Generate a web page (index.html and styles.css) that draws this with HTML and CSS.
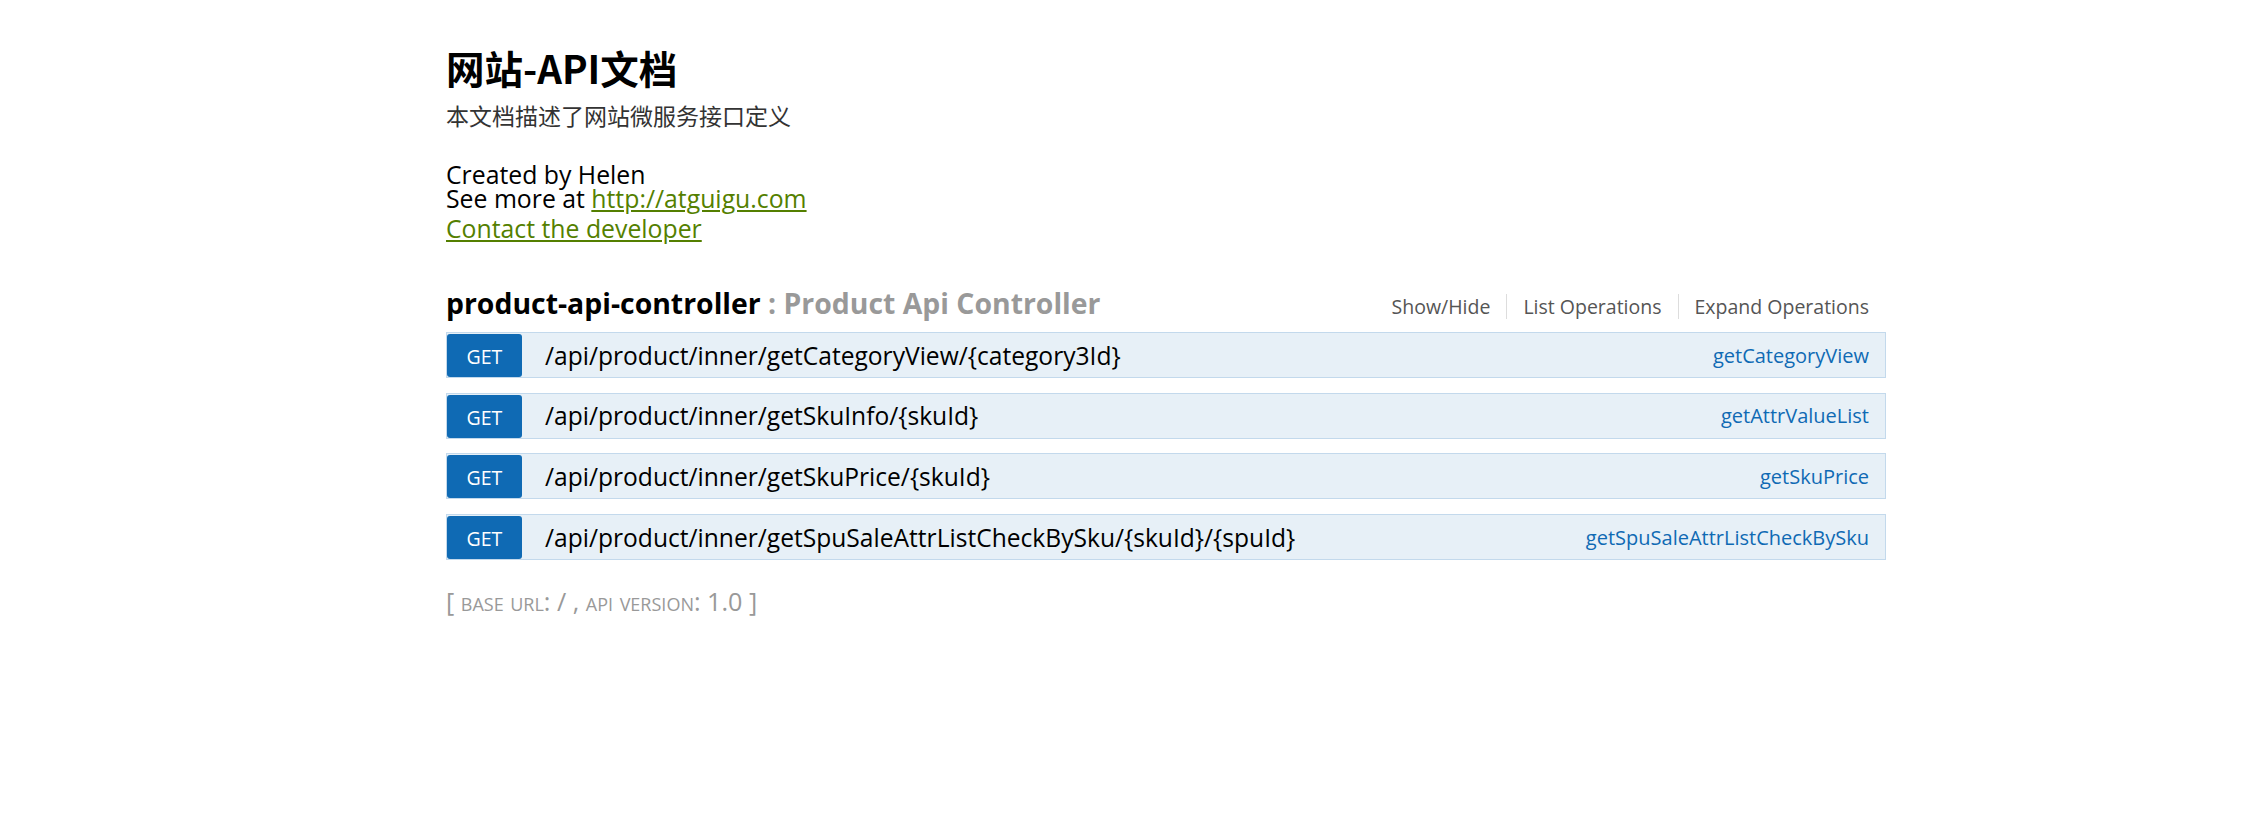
FILE: index.html
```html
<!DOCTYPE html>
<html lang="zh-CN">
<head>
<meta charset="utf-8">
<title>网站-API文档</title>
<link rel="stylesheet" href="styles.css">
</head>
<body>
<div class="wrap">
  <div class="info">
    <div class="info-title">网站-API文档</div>
    <div class="info-desc">本文档描述了网站微服务接口定义</div>
    <div class="info-meta">
      <div>Created by Helen</div>
      <div>See more at <a href="#">http://atguigu.com</a></div>
    </div>
    <div class="info-contact"><a href="#">Contact the developer</a></div>
  </div>

  <div class="resource">
    <div class="res-heading">
      <h2 class="res-title"><span class="res-name">product-api-controller</span> <span class="res-desc">: Product Api Controller</span></h2>
      <ul class="options">
        <li>Show/Hide</li>
        <li>List Operations</li>
        <li>Expand Operations</li>
      </ul>
    </div>
    <ul class="ops">
      <li class="op">
        <span class="method">GET</span>
        <span class="path">/api/product/inner/getCategoryView/{category3Id}</span>
        <span class="summary">getCategoryView</span>
      </li>
      <li class="op">
        <span class="method">GET</span>
        <span class="path">/api/product/inner/getSkuInfo/{skuId}</span>
        <span class="summary">getAttrValueList</span>
      </li>
      <li class="op">
        <span class="method">GET</span>
        <span class="path">/api/product/inner/getSkuPrice/{skuId}</span>
        <span class="summary">getSkuPrice</span>
      </li>
      <li class="op">
        <span class="method">GET</span>
        <span class="path">/api/product/inner/getSpuSaleAttrListCheckBySku/{skuId}/{spuId}</span>
        <span class="summary">getSpuSaleAttrListCheckBySku</span>
      </li>
    </ul>
  </div>

  <div class="footer">[ <span class="sc">base url</span>: / , <span class="sc">api version</span>: 1.0 ]</div>
</div>
</body>
</html>
```

FILE: styles.css
```css
html, body {
  margin: 0;
  padding: 0;
  background: #ffffff;
}
body {
  font-family: "Open Sans", "Noto Sans CJK SC", sans-serif;
  color: #000;
}
.wrap {
  width: 1440px;
  margin-left: 446px;
  padding-top: 44px;
}
.info-title {
  font-size: 38.5px;
  line-height: 46px;
  font-weight: bold;
  font-family: "Noto Sans CJK SC", "Open Sans", sans-serif;
}
.info-desc {
  margin-top: 11px;
  font-size: 23px;
  line-height: 28px;
  color: #333;
  font-family: "Noto Sans CJK SC", sans-serif;
}
.info-meta {
  margin-top: 33px;
  font-size: 24.8px;
  line-height: 24px;
}
.info-contact {
  margin-top: 6px;
  font-size: 24.8px;
  line-height: 24px;
}
a {
  color: #547f00;
  text-decoration: underline;
}
.resource {
  margin-top: 48px;
}
.res-heading {
  display: flex;
  align-items: baseline;
  justify-content: space-between;
  margin-bottom: 13px;
}
.res-title {
  margin: 0;
  font-size: 28.4px;
  line-height: 30px;
  font-weight: bold;
}
.res-name { color: #000; }
.res-desc { color: #999; }
.options {
  list-style: none;
  margin: 0;
  padding: 0;
  display: flex;
  align-items: baseline;
}
.options li {
  font-size: 19.5px;
  line-height: 25px;
  color: #555;
  padding: 0 16px;
  border-right: 1px solid #dddddd;
}
.options li:last-child {
  border-right: none;
  padding-right: 17px;
}
.ops {
  list-style: none;
  margin: 0;
  padding: 0;
}
.op {
  display: flex;
  align-items: center;
  height: 46px;
  box-sizing: border-box;
  border: 1px solid #c3d9ec;
  background: #e7f0f7;
  margin-bottom: 14.7px;
}
.method {
  align-self: stretch;
  width: 75px;
  flex: none;
  margin: 1px 0 0 0;
  background: #0f6ab4;
  color: #fff;
  border-radius: 3px;
  font-size: 19.5px;
  display: flex;
  align-items: center;
  justify-content: center;
  padding-top: 2px;
  box-sizing: border-box;
}
.path {
  padding-left: 23px;
  font-size: 24.6px;
  flex: 1;
}
.summary {
  color: #0f6ab4;
  font-size: 20px;
  padding-right: 16px;
}
.footer {
  margin-top: 26px;
  font-size: 25.2px;
  line-height: 30px;
  color: #999;
}
.sc {
  font-variant: small-caps;
}
```
